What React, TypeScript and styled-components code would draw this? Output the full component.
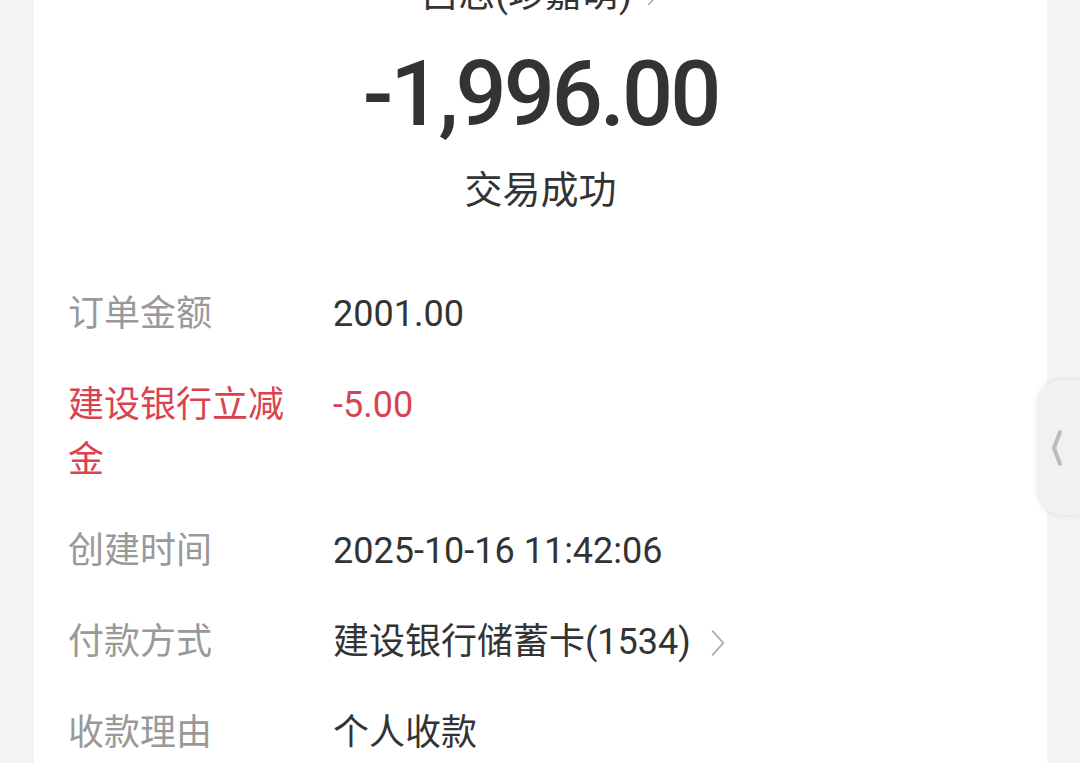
import styled, { createGlobalStyle } from "styled-components";

const GlobalStyle = createGlobalStyle`
  html, body {
    margin: 0;
    padding: 0;
    background: #f4f4f4;
    font-family: Roboto, "Noto Sans CJK SC", sans-serif;
    overflow: hidden;
  }
`;

const Card = styled.div`
  margin: 0 33px 0 34px;
  height: 100vh;
  background: #fff;
  overflow: hidden;
  display: flex;
  flex-direction: column;
`;

const Header = styled.div`
  display: flex;
  flex-direction: column;
  align-items: center;
`;

const Payee = styled.div`
  margin-top: -30px;
  height: 50px;
  line-height: 50px;
  font-size: 37px;
  color: #333;
  display: flex;
  align-items: center;
  gap: 14px;
`;

const Amount = styled.div`
  margin-top: 25px;
  line-height: 100px;
  font-size: 90px;
  font-weight: 500;
  letter-spacing: -3px;
  color: #333;
`;

const Status = styled.div`
  margin-top: 20px;
  line-height: 50px;
  font-size: 38px;
  color: #333;
`;

const List = styled.div`
  margin-top: 72px;
  padding: 0 34px;
  display: flex;
  flex-direction: column;
  gap: 36px;
`;

const Row = styled.div<{ $red?: boolean }>`
  display: flex;
  align-items: flex-start;
  gap: 25px;
  font-size: 36px;
  line-height: 55px;
  color: ${(p) => (p.$red ? "#d9434f" : "#333")};
`;

const Label = styled.div<{ $red?: boolean }>`
  width: 240px;
  flex-shrink: 0;
  color: ${(p) => (p.$red ? "#d9434f" : "#999")};
`;

const Value = styled.div`
  display: flex;
  align-items: center;
  gap: 18px;
`;

const SideTab = styled.div`
  position: fixed;
  right: -20px;
  top: 380px;
  width: 62px;
  height: 135px;
  border-radius: 24px;
  background: #f1f1f1;
  box-shadow: 0 0 6px rgba(0, 0, 0, 0.12);
  display: flex;
  align-items: center;
  padding-left: 12px;
  box-sizing: border-box;
`;

const Chevron = ({ color, w, h, sw }: { color: string; w: number; h: number; sw: number }) => (
  <svg width={w} height={h} viewBox="0 0 16 28" fill="none">
    <path d="M3 3 L13 14 L3 25" stroke={color} strokeWidth={sw} strokeLinecap="round" strokeLinejoin="round" />
  </svg>
);

const rows = [
  { label: "订单金额", value: "2001.00" },
  { label: "建设银行立减金", value: "-5.00", red: true },
  { label: "创建时间", value: "2025-10-16 11:42:06" },
  { label: "付款方式", value: "建设银行储蓄卡(1534)", arrow: true },
  { label: "收款理由", value: "个人收款" },
];

export default function App() {
  return (
    <>
      <GlobalStyle />
      <Card>
        <Header>
          <Payee>
            吕志(珍嘉萌)
            <Chevron color="#aaa" w={14} h={24} sw={1.8} />
          </Payee>
          <Amount>-1,996.00</Amount>
          <Status>交易成功</Status>
        </Header>
        <List>
          {rows.map((r) => (
            <Row key={r.label} $red={r.red}>
              <Label $red={r.red}>{r.label}</Label>
              <Value>
                {r.value}
                {r.arrow && <Chevron color="#aaa" w={18} h={30} sw={1.7} />}
              </Value>
            </Row>
          ))}
        </List>
      </Card>
      <SideTab>
        <svg width="14" height="40" viewBox="0 0 14 40" fill="none">
          <path d="M10 4 L4 20 L10 36" stroke="#bdbdbd" strokeWidth="4" strokeLinecap="round" strokeLinejoin="round" />
        </svg>
      </SideTab>
    </>
  );
}
